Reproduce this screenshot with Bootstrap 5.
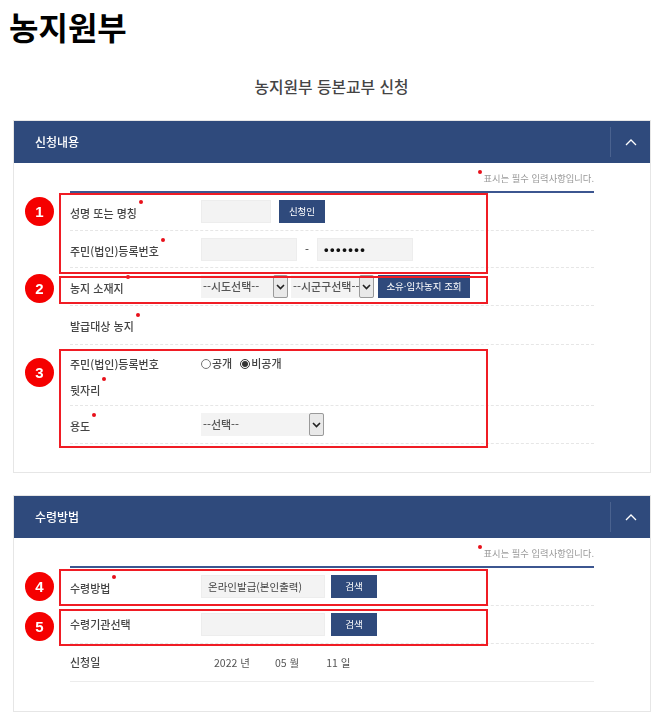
<!DOCTYPE html>
<html lang="ko">
<head>
<meta charset="utf-8">
<title>농지원부</title>
<link href="https://cdn.jsdelivr.net/npm/bootstrap@5.3.0/dist/css/bootstrap.min.css" rel="stylesheet">
<style>
body{background:#fff;font-family:"Noto Sans CJK KR","Liberation Sans",sans-serif;color:#444;width:663px;overflow-x:hidden}
.page-title{font-size:32px;font-weight:700;color:#000;margin:0;padding:6px 0 0 9px;line-height:40px;height:49px}
.sub-title{font-size:15.8px;font-weight:500;color:#444;text-align:center;margin:0;padding-top:26px;line-height:24px;height:71px}
.panel{margin:0 12px 22px 13px;border:1px solid #e6e6e6;border-radius:0;filter:blur(.35px)}
.panel-top{background:#2f4a7c;color:#fff;height:42px;border:0;border-radius:0!important;padding:0 0 0 21px;font-size:12px;font-weight:500}
.panel-toggle{width:40px;height:30px;border-left:1px solid #4a628f}
.panel-main{padding:0 56px 0 56px}
.first-main{height:309px}
.second-main{height:173px}
.note{height:28px;font-size:9.3px;color:#999;padding-top:6px;line-height:18px}
.dot{display:inline-block;width:4px;height:4px;background:#e8101a;border-radius:50%;vertical-align:14px;margin-left:2px}
.note .dot{margin:0 2px 0 0;vertical-align:8px}
.fields{border-top:2px solid #3c5690}
.fields-line{border-bottom:1px dashed #e6e6e6;font-size:11px;font-weight:500;color:#444}
.solid-line{border-bottom:1px solid #ececec}
.field-name{width:131px;flex:none}
.with-dot{margin-top:-2px}
.h39{height:39px}.h37{height:37px}.h38{height:38px}.h61{height:61px}
.tall{padding-top:7px;line-height:25px}
.box-in{height:23px;background:#f3f3f3;border:1px solid #ededed;border-radius:0;font-size:10.5px;padding:0 6px;color:#444;flex:none}
.box-in:focus{background:#f3f3f3;box-shadow:none;border-color:#ededed}
.w70{width:70px}.w96{width:96px}.w124{width:124px}
.pw{font:700 13px "Liberation Sans",sans-serif;letter-spacing:1.5px;color:#111}
.go{height:23px;background:#2f4a7c;color:#fff;border:0;border-radius:0;font-size:9.5px;padding:0;line-height:23px;flex:none;font-weight:400}
.go:hover{background:#2f4a7c;color:#fff}
.w46{width:46px}.w92{width:92px}
.gap8{margin-left:8px}.gap6{margin-left:6px}.gap3{margin-left:3px}
.dash{width:20px;text-align:center;flex:none;color:#555}
.pick{height:23px;flex:none;background:#f3f3f3}
.pick select{appearance:none;-webkit-appearance:none;border:0;background:transparent;font-size:11px;font-weight:500;color:#555;padding:0 0 0 2px;height:23px;flex:1;min-width:0;outline:0;font-family:inherit}
.pick-arrow{width:15px;height:23px;background:#e9e9e9;border:1px solid #9a9a9a;border-radius:2px;display:flex;align-items:center;justify-content:center;flex:none}
.p87{width:87px}.p83{width:83px}.p122{width:123px}
.radio-set{font-size:11px;line-height:14px;padding-top:11px}
.radio-set input{width:10px;height:10px;margin:0 1px 0 0;accent-color:#333;vertical-align:-1px}
.date-part{font-size:10.5px;font-weight:400;color:#555}
.date-a{margin-left:13px}.date-b{margin-left:25px}.date-c{margin-left:27px}
.ann-box{position:absolute;left:45px;width:429px;border:2px solid #f01c24;pointer-events:none}
.ann-num{position:absolute;left:11px;width:29px;height:29px;border-radius:50%;background:#f50000;color:#fff;font:700 15px/29px "Liberation Sans",sans-serif;text-align:center}
</style>
</head>
<body>
<h1 class="page-title">농지원부</h1>
<h2 class="sub-title">농지원부 등본교부 신청</h2>

<section class="card panel">
  <div class="card-header panel-top d-flex align-items-center justify-content-between">
    <span>신청내용</span>
    <span class="panel-toggle d-flex align-items-center justify-content-center">
      <svg width="12" height="7" viewBox="0 0 12 7" fill="none" stroke="#fff" stroke-width="1.3"><polyline points="1,6 6,1 11,6"/></svg>
    </span>
  </div>
  <div class="card-body panel-main first-main position-relative">
    <div class="note text-end"><span class="dot"></span>표시는 필수 입력사항입니다.</div>
    <div class="fields">
      <div class="fields-line h38 d-flex align-items-center">
        <div class="field-name with-dot">성명 또는 명칭<span class="dot"></span></div>
        <input class="form-control box-in w70" type="text" aria-label="성명">
        <button class="btn go w46 gap8" type="button">신청인</button>
      </div>
      <div class="fields-line h37 d-flex align-items-center">
        <div class="field-name">주민(법인)등록번호<span class="dot"></span></div>
        <input class="form-control box-in w96" type="text" aria-label="앞자리">
        <span class="dash">-</span>
        <input class="form-control box-in w96 pw" type="text" value="•••••••" aria-label="뒷자리">
      </div>
      <div class="fields-line h38 d-flex align-items-center">
        <div class="field-name with-dot">농지 소재지<span class="dot"></span></div>
        <div class="pick p87 d-flex"><select aria-label="시도"><option>--시도선택--</option></select><span class="pick-arrow"><svg width="9" height="6" viewBox="0 0 9 6" fill="none" stroke="#222" stroke-width="1.6"><polyline points="1,1 4.5,4.5 8,1"/></svg></span></div>
        <div class="pick p83 d-flex gap3"><select aria-label="시군구"><option>--시군구선택--</option></select><span class="pick-arrow"><svg width="9" height="6" viewBox="0 0 9 6" fill="none" stroke="#222" stroke-width="1.6"><polyline points="1,1 4.5,4.5 8,1"/></svg></span></div>
        <button class="btn go w92 ms-1" type="button">소유·임차농지 조회</button>
      </div>
      <div class="fields-line h39 d-flex align-items-center">
        <div class="field-name with-dot">발급대상 농지<span class="dot"></span></div>
      </div>
      <div class="fields-line h61 d-flex align-items-start">
        <div class="field-name tall">주민(법인)등록번호<br>뒷자리<span class="dot"></span></div>
        <div class="radio-set d-flex gap-2">
          <label><input type="radio" name="open">공개</label>
          <label><input type="radio" name="open" checked>비공개</label>
        </div>
      </div>
      <div class="fields-line h38 d-flex align-items-center">
        <div class="field-name with-dot">용도<span class="dot"></span></div>
        <div class="pick p122 d-flex"><select aria-label="용도"><option>--선택--</option></select><span class="pick-arrow"><svg width="9" height="6" viewBox="0 0 9 6" fill="none" stroke="#222" stroke-width="1.6"><polyline points="1,1 4.5,4.5 8,1"/></svg></span></div>
      </div>
    </div>
    <span class="ann-box" style="top:30px;height:81px"></span>
    <span class="ann-box" style="top:113px;height:28px"></span>
    <span class="ann-box" style="top:186px;height:99px"></span>
    <span class="ann-num" style="top:34px">1</span>
    <span class="ann-num" style="top:111px">2</span>
    <span class="ann-num" style="top:195px">3</span>
  </div>
</section>

<section class="card panel">
  <div class="card-header panel-top d-flex align-items-center justify-content-between">
    <span>수령방법</span>
    <span class="panel-toggle d-flex align-items-center justify-content-center">
      <svg width="12" height="7" viewBox="0 0 12 7" fill="none" stroke="#fff" stroke-width="1.3"><polyline points="1,6 6,1 11,6"/></svg>
    </span>
  </div>
  <div class="card-body panel-main second-main position-relative">
    <div class="note text-end"><span class="dot"></span>표시는 필수 입력사항입니다.</div>
    <div class="fields">
      <div class="fields-line h38 d-flex align-items-center">
        <div class="field-name with-dot">수령방법<span class="dot"></span></div>
        <input class="form-control box-in w124" type="text" value="온라인발급(본인출력)" aria-label="수령방법">
        <button class="btn go w46 gap6" type="button">검색</button>
      </div>
      <div class="fields-line h38 d-flex align-items-center">
        <div class="field-name">수령기관선택</div>
        <input class="form-control box-in w124" type="text" aria-label="수령기관">
        <button class="btn go w46 gap6" type="button">검색</button>
      </div>
      <div class="fields-line solid-line h38 d-flex align-items-center">
        <div class="field-name">신청일</div>
        <div class="date-part d-flex">
          <span class="date-a">2022 년</span>
          <span class="date-b">05 월</span>
          <span class="date-c">11 일</span>
        </div>
      </div>
    </div>
    <span class="ann-box" style="top:31px;height:37px"></span>
    <span class="ann-box" style="top:71px;height:37px"></span>
    <span class="ann-num" style="top:34px">4</span>
    <span class="ann-num" style="top:74px">5</span>
  </div>
</section>
<script src="https://cdn.jsdelivr.net/npm/bootstrap@5.3.0/dist/js/bootstrap.bundle.min.js"></script>
</body>
</html>
